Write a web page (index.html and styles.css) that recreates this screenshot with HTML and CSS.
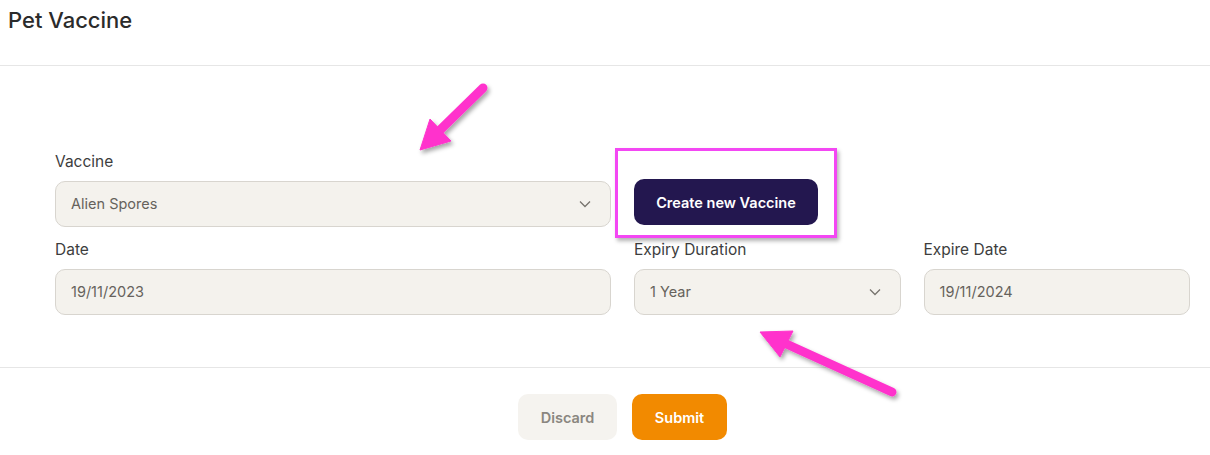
FILE: index.html
```html
<!DOCTYPE html>
<html>
<head>
<meta charset="utf-8">
<link rel="stylesheet" href="styles.css">
</head>
<body>
<div class="page">
  <header class="head"><h1 class="title">Pet Vaccine</h1></header>
  <section class="form">
    <div class="grid">
      <div class="field span2">
        <label class="lbl">Vaccine</label>
        <div class="box select"><span>Alien Spores</span>
          <svg class="chev" width="12" height="8" viewBox="0 0 12 8"><path d="M1 1.5 L6 6.5 L11 1.5" fill="none" stroke="#77746e" stroke-width="1.3"/></svg>
        </div>
      </div>
      <div class="field btncell">
        <button class="btn dark">Create new Vaccine</button>
      </div>
      <div class="field"></div>
      <div class="field span2">
        <label class="lbl">Date</label>
        <div class="box"><span>19/11/2023</span></div>
      </div>
      <div class="field">
        <label class="lbl">Expiry Duration</label>
        <div class="box select"><span>1 Year</span>
          <svg class="chev" width="12" height="8" viewBox="0 0 12 8"><path d="M1 1.5 L6 6.5 L11 1.5" fill="none" stroke="#77746e" stroke-width="1.3"/></svg>
        </div>
      </div>
      <div class="field">
        <label class="lbl">Expire Date</label>
        <div class="box"><span>19/11/2024</span></div>
      </div>
    </div>
  </section>
  <footer class="foot">
    <button class="btn light">Discard</button>
    <button class="btn orange">Submit</button>
  </footer>
  <div class="highlight"></div>
  <svg class="arrows" width="1210" height="455" viewBox="0 0 1210 455">
    <defs>
      <filter id="sh" x="-20%" y="-20%" width="140%" height="140%">
        <feDropShadow dx="2" dy="3" stdDeviation="2" flood-color="#000" flood-opacity="0.35"/>
      </filter>
    </defs>
    <g filter="url(#sh)" fill="#ff33cc" stroke="#ff33cc">
      <line x1="483" y1="88" x2="437" y2="133" stroke-width="9" stroke-linecap="round"/>
      <polygon points="430,119 420,150 451,141" stroke-width="1" stroke-linejoin="round"/>
      <line x1="892" y1="392" x2="782" y2="342" stroke-width="9" stroke-linecap="round"/>
      <polygon points="760,332 793,331 780,357" stroke-width="1" stroke-linejoin="round"/>
    </g>
  </svg>
</div>
</body>
</html>
```

FILE: styles.css
```css
* { box-sizing: border-box; }
html, body { margin: 0; padding: 0; background: #fff; }
body { font-family: Inter, "Noto Sans", "Liberation Sans", sans-serif; color: #333; }
.page { position: relative; width: 1210px; height: 455px; overflow: hidden; }
.head { height: 66px; border-bottom: 1px solid #e6e6e6; padding: 7px 8px 0; }
.title { margin: 0; font-size: 22px; font-weight: 500; line-height: 26px; color: #2b2b2b; letter-spacing: 0; }
.form { padding: 86px 20px 52px 55px; border-bottom: 1px solid #e6e6e6; }
.grid { display: grid; grid-template-columns: repeat(4, 1fr); column-gap: 23px; row-gap: 13px; }
.span2 { grid-column: span 2; }
.field { display: flex; flex-direction: column; }
.lbl { font-size: 15.5px; line-height: 20px; color: #3d3d3d; margin-bottom: 9px; }
.box { height: 46px; border: 1px solid #d8d5cf; border-radius: 10px; background: #f4f2ed; display: flex; align-items: center; justify-content: space-between; padding: 0 19px 1px 15px; font-size: 14.5px; color: #66625c; }
.chev { display: block; }
.btncell { justify-content: flex-end; padding-bottom: 2px; }
.btn { font-family: inherit; border: none; border-radius: 10px; height: 46px; font-size: 14.5px; font-weight: 600; cursor: pointer; }
.dark { background: #23174f; color: #fff; width: 184px; }
.foot { display: flex; justify-content: center; gap: 15px; padding: 26px 0 0 35px; }
.light { background: #f5f3ef; color: #8a8680; width: 99px; }
.orange { background: #f28a00; color: #fff; width: 95px; }
.highlight { position: absolute; left: 615px; top: 148px; width: 222px; height: 90px; border: 3px solid #f347f3; box-shadow: 2px 3px 4px rgba(0,0,0,0.3); pointer-events: none; }
.arrows { position: absolute; left: 0; top: 0; pointer-events: none; }
```
